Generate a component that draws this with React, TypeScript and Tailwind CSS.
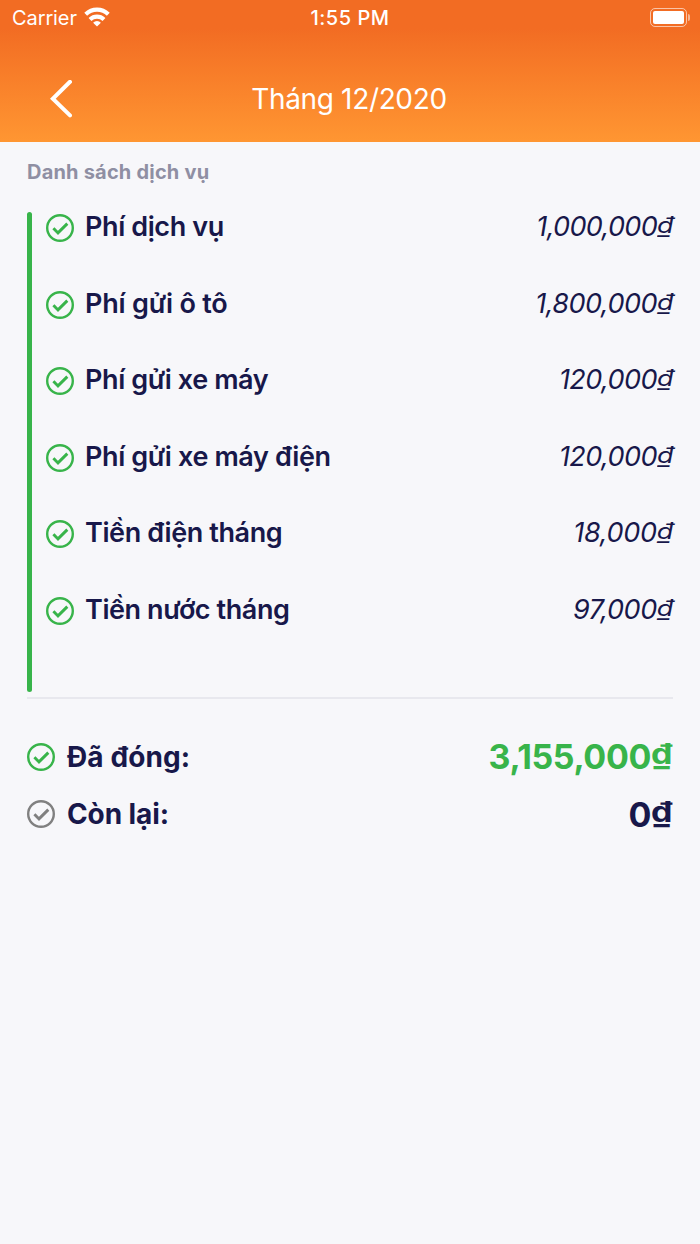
import React from 'react';

interface Fee {
  id: number;
  name: string;
  amount: string;
  nameClass: string;
  amountClass: string;
}

const fees: Fee[] = [
  { id: 1, name: 'Phí dịch vụ', amount: '1,000,000', nameClass: 'tracking-[-0.4px]', amountClass: 'tracking-[-0.65px]' },
  { id: 2, name: 'Phí gửi ô tô', amount: '1,800,000', nameClass: 'tracking-[-0.2px]', amountClass: 'tracking-[-0.5px]' },
  { id: 3, name: 'Phí gửi xe máy', amount: '120,000', nameClass: 'tracking-[-0.4px]', amountClass: 'tracking-[-0.55px]' },
  { id: 4, name: 'Phí gửi xe máy điện', amount: '120,000', nameClass: 'tracking-[-0.38px]', amountClass: 'tracking-[-0.55px]' },
  { id: 5, name: 'Tiền điện tháng', amount: '18,000', nameClass: 'tracking-[-0.4px]', amountClass: 'tracking-[-0.3px]' },
  { id: 6, name: 'Tiền nước tháng', amount: '97,000', nameClass: 'tracking-[-0.42px]', amountClass: 'tracking-[-0.4px]' },
];

const CheckCircle: React.FC<{ className: string }> = ({ className }) => (
  <svg viewBox="0 0 28 28" fill="none" stroke="currentColor" className={`w-7 h-7 shrink-0 ${className}`}>
    <circle cx="14" cy="14" r="12.8" strokeWidth="2.4" />
    <path d="M7.4 14.2l4.6 4.7 9.3-9.3" strokeWidth="2.9" />
  </svg>
);

// Currency sign sits on the baseline, underline included
const Dong: React.FC = () => (
  <span className="inline-block scale-y-[0.82] origin-[50%_19%]">₫</span>
);

const StatusBar: React.FC = () => (
  <div className="grid grid-cols-3 items-center h-9 pl-3 pr-[10px] text-xl leading-9">
    <div className="flex items-center gap-[7px]">
      <span className="tracking-[-0.1px]">Carrier</span>
      <svg viewBox="0 0 26 20" className="w-[26px] h-5 -mt-0.5" fill="none" stroke="currentColor" strokeWidth="4.1">
        <path d="M1.7 7.2a16.3 16.3 0 0 1 22.6 0" />
        <path d="M6 12.4a10.2 10.2 0 0 1 14 0" />
        <path d="M13 19.4l-3.9-3.7a5.6 5.6 0 0 1 7.8 0z" fill="currentColor" stroke="none" />
      </svg>
    </div>
    <span className="text-center font-medium tracking-[0.5px] -ml-[2px]">1:55 PM</span>
    <div className="flex items-center justify-end gap-[1px] -mt-0.5">
      <div className="w-[37px] h-[19px] p-[2px] border border-white/60 rounded-[5px]">
        <div className="h-full bg-white rounded-[2px]" />
      </div>
      <div className="w-[2px] h-[7px] bg-white/50 rounded-r-full" />
    </div>
  </div>
);

const Header: React.FC = () => (
  <header className="h-[142px] text-white bg-linear-to-b from-[#f26c23] from-20% to-[#ff9632]">
    <StatusBar />
    <div className="grid grid-cols-[100px_1fr_100px] items-center pt-[43px]">
      <svg viewBox="0 0 22 38" className="w-[22px] h-[38px] ml-[50px]" fill="none" stroke="currentColor" strokeWidth="4">
        <path d="M20 1.8L2.8 18.7 20 35.4" strokeLinecap="round" />
      </svg>
      <h1 className="text-center text-[28px] leading-[40px] tracking-[-0.35px] -ml-[2px]">Tháng 12/2020</h1>
    </div>
  </header>
);

export default function App() {
  return (
    <div className="min-h-[1244px] bg-[#f7f7fa] text-[#18184a] font-['Inter',sans-serif]">
      <Header />
      <main className="px-[27px] pt-[14px]">
        <h2 className="text-xl leading-8 font-bold tracking-[0.2px] text-[#8f8fa3]">Danh sách dịch vụ</h2>

        <div className="flex mt-6 h-[480px]">
          <div className="w-[5px] shrink-0 rounded-full bg-[#38b44a]" />
          <ul className="flex-1 ml-[14px]">
            {fees.map((fee) => (
              <li key={fee.id} className="flex items-start h-[76.6px]">
                <CheckCircle className="text-[#38b44a] mt-[2px]" />
                <span className={`flex-1 ml-[11px] text-[27px] leading-[30.5px] font-semibold ${fee.nameClass}`}>{fee.name}</span>
                <span className={`text-[27px] leading-[30.5px] italic ${fee.amountClass}`}>{fee.amount}<Dong /></span>
              </li>
            ))}
          </ul>
        </div>

        <div className="mt-[5px] h-[2px] bg-[#e8e8ee]" />

        {/* Totals */}
        <div className="flex items-center h-[57.5px] mt-[29px]">
          <CheckCircle className="text-[#38b44a]" />
          <span className="flex-1 ml-3 text-[28px] leading-10 font-bold tracking-[0.1px]">Đã đóng:</span>
          <span className="text-[34px] leading-[41px] font-bold tracking-[-0.4px] mr-[1px] text-[#38b44a]">3,155,000<Dong /></span>
        </div>
        <div className="flex items-center h-[57.5px]">
          <CheckCircle className="text-[#808080]" />
          <span className="flex-1 ml-3 text-[28px] leading-10 font-bold tracking-[-0.1px]">Còn lại:</span>
          <span className="text-[34px] leading-[41px] font-bold tracking-[-0.4px] mr-[1px]">0<Dong /></span>
        </div>
      </main>
    </div>
  );
}
